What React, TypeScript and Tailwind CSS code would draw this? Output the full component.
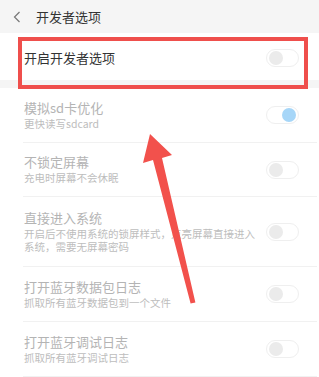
const rows = [
  { title: "模拟sd卡优化", sub: "更快读写sdcard", on: true, h: "h-[55px]" },
  { title: "不锁定屏幕", sub: "充电时屏幕不会休眠", on: false, h: "h-[54px]" },
  {
    title: "直接进入系统",
    sub: "开启后不使用系统的锁屏样式，点亮屏幕直接进入\n系统，需要无屏幕密码",
    on: false,
    h: "h-[70px]",
  },
  { title: "打开蓝牙数据包日志", sub: "抓取所有蓝牙数据包到一个文件", on: false, h: "h-[55px]" },
  { title: "打开蓝牙调试日志", sub: "抓取所有蓝牙调试日志", on: false, h: "h-[55px]" },
];

const Toggle = ({ on }: { on: boolean }) => (
  <div
    className={
      "w-[33px] h-[18px] rounded-full border border-[#efefef] bg-white flex items-center px-[2px] shrink-0 " +
      (on ? "justify-end" : "justify-start")
    }
  >
    <div className={"w-[14px] h-[14px] rounded-full " + (on ? "bg-[#a6d6f8]" : "bg-[#ebebeb]")} />
  </div>
);

const App = () => {
  return (
    <div className="relative w-[319px] h-[377px] overflow-hidden bg-white font-['Noto_Sans_CJK_SC',sans-serif]">
      <div className="h-[33px] bg-[#f5f5f5] flex items-center">
        <svg className="ml-[13px]" width="8" height="12" viewBox="0 0 8 12">
          <polyline points="6.5,1 1.5,6 6.5,11" fill="none" stroke="#777" strokeWidth="1.2" />
        </svg>
        <span className="ml-[15px] text-[13px] leading-none text-[#333]">开发者选项</span>
      </div>

      <div className="h-[47px] flex items-center justify-between pl-[24px] pr-[20px] pt-[3px]">
        <span className="text-[13px] text-[#333]">开启开发者选项</span>
        <Toggle on={false} />
      </div>
      <div className="h-[8px] bg-[#f5f5f5]" />

      <div className="flex flex-col">
        {rows.map((r) => (
          <div
            key={r.title}
            className={"ml-[23px] mr-[2px] border-b border-[#f1f1f1] flex items-center justify-between pl-[1px] pr-[18px] " + r.h}
          >
            <div className="flex flex-col gap-[2px]">
              <span className="text-[13px] leading-[15px] text-[#b4b4b4]">{r.title}</span>
              <span className="text-[10.5px] leading-[13.5px] text-[#bdbdbd] whitespace-pre">{r.sub}</span>
            </div>
            <Toggle on={r.on} />
          </div>
        ))}
      </div>

      {/* annotation */}
      <div className="absolute left-[18px] top-[37px] w-[290px] h-[52px] border-[4px] border-[#ef4f4c]" />
      <svg className="absolute left-0 top-0" width="319" height="377" viewBox="0 0 319 377">
        <polygon
          points="150,134 172,155 162,158 195.4,302.4 190.6,303.6 153,160 143,163"
          fill="#f2514c"
        />
      </svg>
    </div>
  );
};

export default App;
